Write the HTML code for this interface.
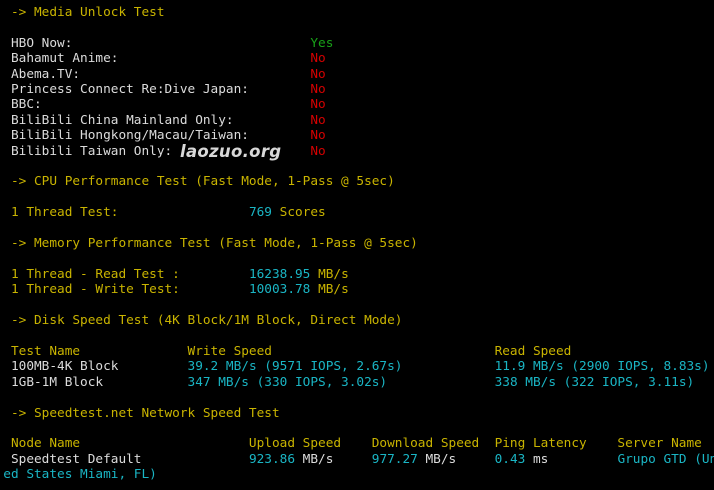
<!DOCTYPE html>
<html><head><meta charset="utf-8"><style>
html,body{margin:0;padding:0;background:#000;width:714px;height:490px;overflow:hidden}
pre{margin:0;padding:5px 0 0 3.3px;font-family:"DejaVu Sans Mono","Liberation Mono",monospace;font-size:12.76px;line-height:15.4px;color:#dcdcdc;white-space:pre;overflow:hidden;width:711px}
.y{color:#c9b400}.c{color:#1ab5c4}.r{color:#d40000}.g{color:#18a018}
.wm{position:absolute;left:180px;top:142px;font-family:"DejaVu Sans","Liberation Sans",sans-serif;font-weight:bold;font-style:italic;font-size:16.5px;color:#d8d8d8;letter-spacing:0.3px}
</style></head><body>
<pre><span class="y"> -> Media Unlock Test</span>

 HBO Now:                               <span class="g">Yes</span>
 Bahamut Anime:                         <span class="r">No</span>
 Abema.TV:                              <span class="r">No</span>
 Princess Connect Re:Dive Japan:        <span class="r">No</span>
 BBC:                                   <span class="r">No</span>
 BiliBili China Mainland Only:          <span class="r">No</span>
 BiliBili Hongkong/Macau/Taiwan:        <span class="r">No</span>
 Bilibili Taiwan Only:                  <span class="r">No</span>

<span class="y"> -> CPU Performance Test (Fast Mode, 1-Pass @ 5sec)</span>

<span class="y"> 1 Thread Test:</span>                 <span class="c">769</span> <span class="y">Scores</span>

<span class="y"> -> Memory Performance Test (Fast Mode, 1-Pass @ 5sec)</span>

<span class="y"> 1 Thread - Read Test :</span>         <span class="c">16238.95</span> <span class="y">MB/s</span>
<span class="y"> 1 Thread - Write Test:</span>         <span class="c">10003.78</span> <span class="y">MB/s</span>

<span class="y"> -> Disk Speed Test (4K Block/1M Block, Direct Mode)</span>

<span class="y"> Test Name              Write Speed                             Read Speed</span>
 100MB-4K Block         <span class="c">39.2 MB/s (9571 IOPS, 2.67s)</span>            <span class="c">11.9 MB/s (2900 IOPS, 8.83s)</span>
 1GB-1M Block           <span class="c">347 MB/s (330 IOPS, 3.02s)</span>              <span class="c">338 MB/s (322 IOPS, 3.11s)</span>

<span class="y"> -> Speedtest.net Network Speed Test</span>

<span class="y"> Node Name                      Upload Speed    Download Speed  Ping Latency    Server Name</span>
 Speedtest Default              <span class="c">923.86</span> MB/s     <span class="c">977.27</span> MB/s     <span class="c">0.43</span> ms         <span class="c">Grupo GTD (United</span>
<span class="c">ed States Miami, FL)</span></pre>
<div class="wm">laozuo.org</div>
</body></html>
